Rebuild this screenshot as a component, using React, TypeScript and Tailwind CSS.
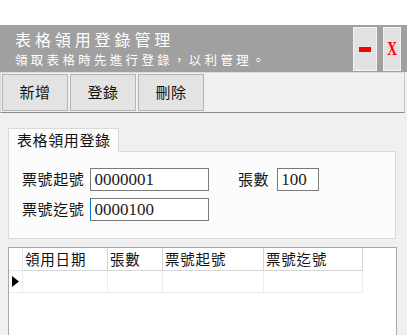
import React from "react";

const cjk = { fontFamily: '"Noto Sans CJK TC", "Noto Sans CJK SC", sans-serif' };
const num = { fontFamily: '"Liberation Serif", "Noto Sans CJK TC", serif' };

function ToolBtn({ label }: { label: string }) {
  return (
    <div className="w-[66px] h-[37px] flex items-center justify-center bg-[#e3e3e3] border border-[#b4b4b4] text-[15px] text-[#111] tracking-[0.5px]">
      {label}
    </div>
  );
}

export default function App() {
  return (
    <div className="w-[407px] h-[335px] bg-[#f0f0f0] overflow-hidden flex flex-col" style={cjk}>
      <div className="h-[25px] bg-white shrink-0" />
      {/* Header */}
      <div className="h-[47px] bg-[#a0a0a0] flex shrink-0">
        <div className="flex-1 pl-[15px] pt-[5px] text-white leading-none">
          <div className="text-[16px] tracking-[3.9px] leading-[19px]">表格領用登錄管理</div>
          <div className="text-[12.5px] tracking-[3.3px] leading-[16px] mt-[3px]">領取表格時先進行登錄，以利管理。</div>
        </div>
        <div className="flex gap-[3px] pt-[2px] pr-[3px]">
          <div className="w-[24px] h-[44px] bg-[#e2e2e2] border border-[#f4f4f4] flex items-center justify-center">
            <div className="w-[12px] h-[5px] bg-[#ff0000]" />
          </div>
          <div
            className="w-[24px] h-[44px] bg-[#e2e2e2] border border-[#f4f4f4] flex items-center justify-center text-[#ff0000] text-[18px] font-bold scale-x-75"
            style={num}
          >
            X
          </div>
        </div>
      </div>
      {/* Toolbar */}
      <div className="h-[41px] shrink-0 border border-[#dcdcdc] border-b-[#8a8a8a] border-r-[#c8c8c8] flex items-center gap-[2px] pl-[1px] mr-[2px]">
        <ToolBtn label="新增" />
        <ToolBtn label="登錄" />
        <ToolBtn label="刪除" />
      </div>
      {/* Tab */}
      <div className="pl-[8px] pt-[15px] shrink-0">
        <div className="w-[111px] h-[24px] bg-[#fcfcfc] border border-[#d9d9d9] border-b-0 flex items-center pl-[8px] text-[15px] tracking-[0.6px] text-[#111] relative z-10">
          表格領用登錄
        </div>
      </div>
      <div className="ml-[8px] mr-[11px] h-[88px] shrink-0 bg-[#fcfcfc] border border-[#d9d9d9] -mt-[1px] relative">
        <div className="absolute left-[13px] top-[16px] flex items-center gap-[6px]">
          <span className="text-[15px] tracking-[0.6px] text-[#111]">票號起號</span>
          <div className="w-[119px] h-[23px] bg-white border border-[#7a7a7a] flex items-center pl-[3px] text-[17px] text-[#1a1a1a]" style={num}>
            0000001
          </div>
        </div>
        <div className="absolute left-[13px] top-[46px] flex items-center gap-[6px]">
          <span className="text-[15px] tracking-[0.6px] text-[#111]">票號迄號</span>
          <div className="w-[119px] h-[23px] bg-white border border-[#7a7a7a] border-l-[#0078d7] flex items-center pl-[3px] text-[17px] text-[#1a1a1a]" style={num}>
            0000100
          </div>
        </div>
        <div className="absolute left-[229px] top-[16px] flex items-center gap-[8px]">
          <span className="text-[15px] tracking-[0.6px] text-[#111]">張數</span>
          <div className="w-[42px] h-[23px] bg-white border border-[#7a7a7a] flex items-center pl-[3px] text-[17px] text-[#1a1a1a]" style={num}>
            100
          </div>
        </div>
      </div>
      {/* Grid */}
      <div className="ml-[8px] mr-[10px] mt-[8px] flex-1 bg-white border border-[#a8a8a8] border-b-0">
        <div className="flex h-[23px] text-[14.5px] tracking-[0.8px] text-[#111]">
          <div className="w-[14px] border-r border-b border-[#e8e8e8] bg-white" />
          <div className="w-[85px] border-r border-b border-[#d6d6d6] pl-[2px] flex items-center">領用日期</div>
          <div className="w-[55px] border-r border-b border-[#d6d6d6] pl-[2px] flex items-center">張數</div>
          <div className="w-[101px] border-r border-b border-[#d6d6d6] pl-[2px] flex items-center">票號起號</div>
          <div className="w-[99px] border-r border-b border-[#d6d6d6] pl-[2px] flex items-center">票號迄號</div>
        </div>
        <div className="flex h-[22px]">
          <div className="w-[14px] border-r border-b border-[#ececec] flex items-center pl-[3px]">
            <svg width="7" height="11" viewBox="0 0 7 11">
              <path d="M0 0 L7 5.5 L0 11 Z" fill="#000" />
            </svg>
          </div>
          <div className="w-[85px] border-r border-b border-[#ececec]" />
          <div className="w-[55px] border-r border-b border-[#ececec]" />
          <div className="w-[101px] border-r border-b border-[#ececec]" />
          <div className="w-[99px] border-r border-b border-[#ececec]" />
        </div>
      </div>
    </div>
  );
}
